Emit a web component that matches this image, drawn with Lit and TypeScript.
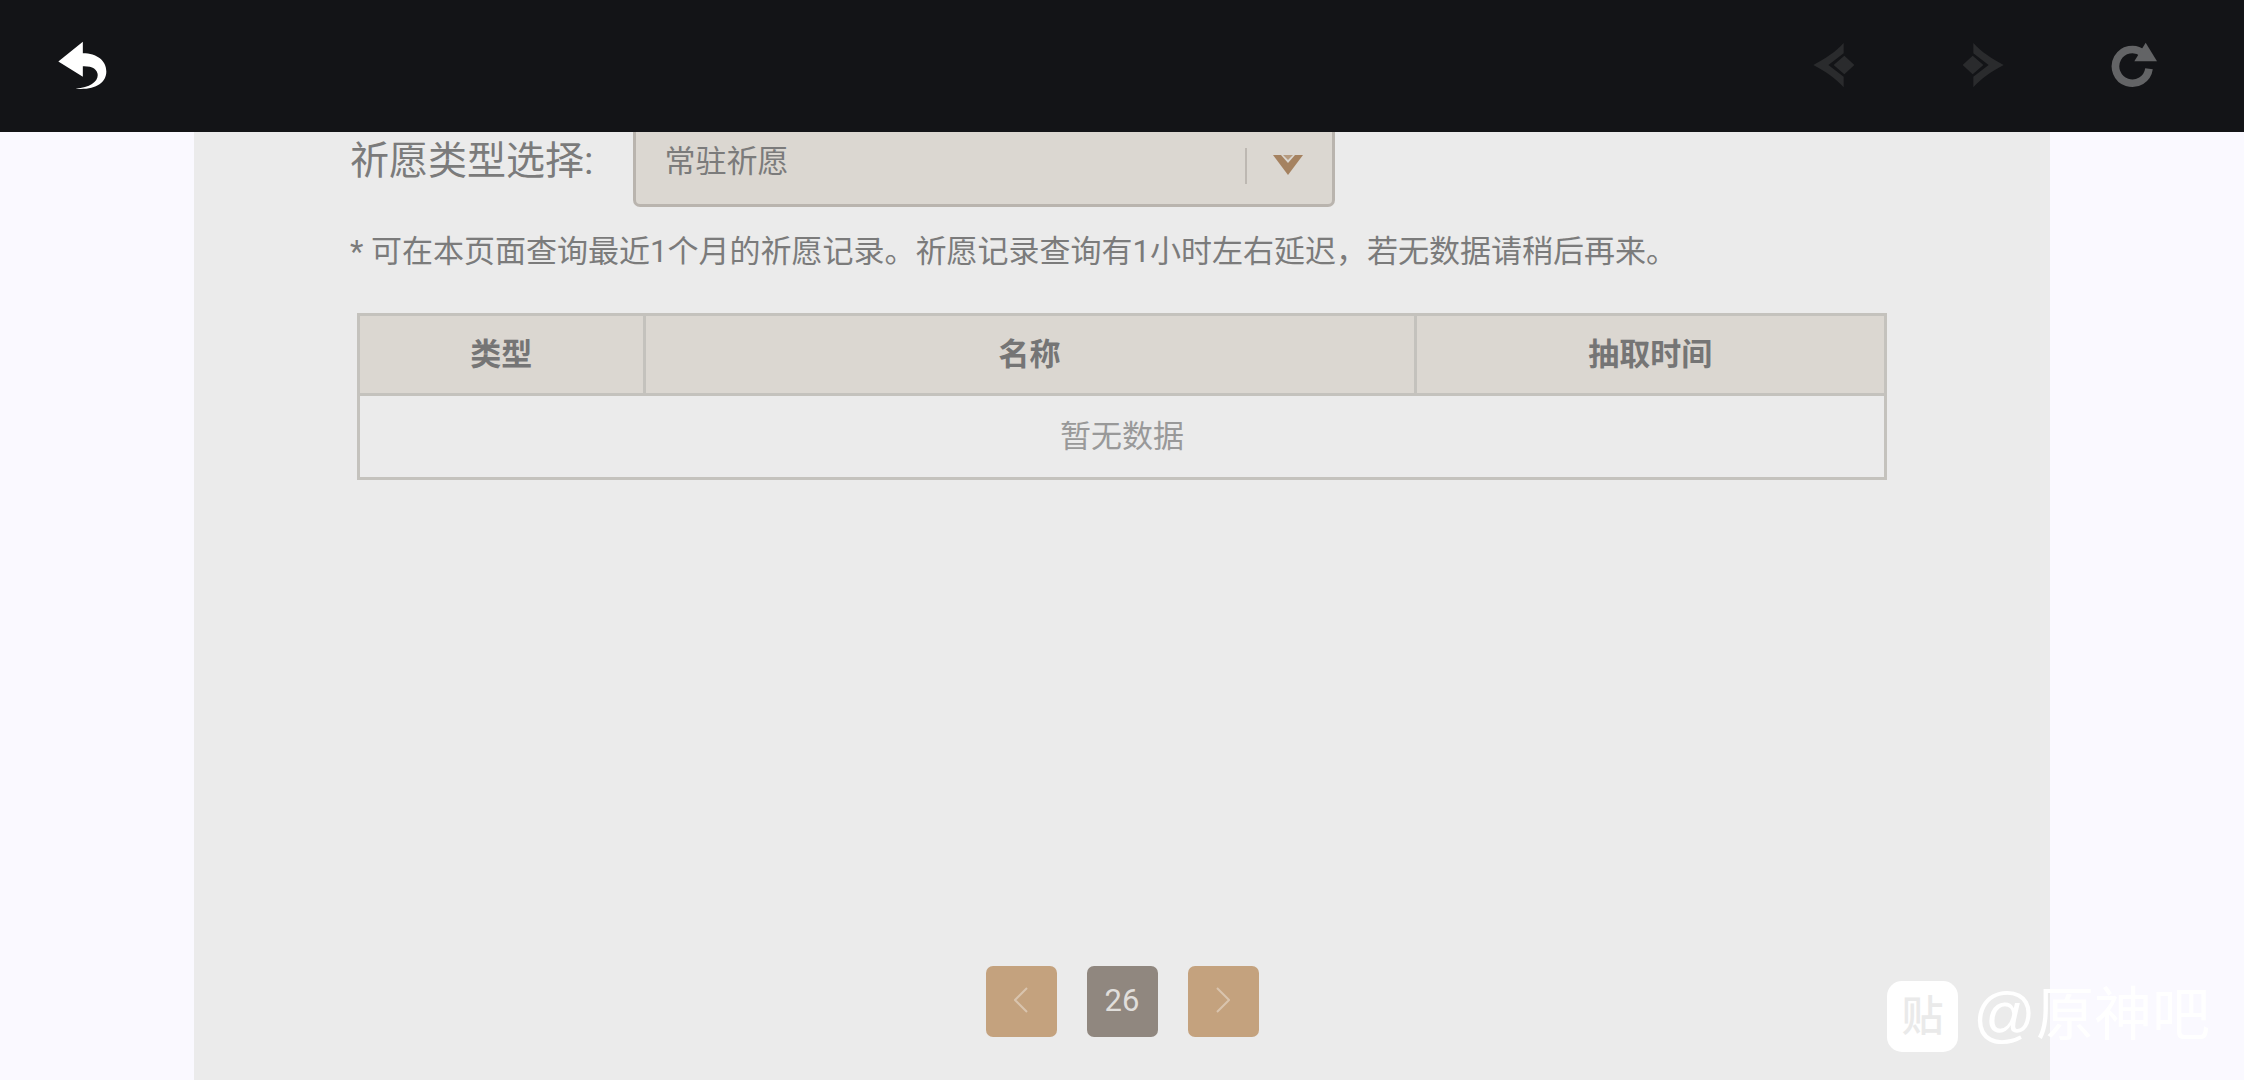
import { LitElement, html, css, svg } from "lit";
import { customElement, state } from "lit/decorators.js";

const backIcon = svg`<svg class="icon-back" viewBox="84 60 148 148" aria-hidden="true">
  <path d="M85 122 L159 62 V97 C202 97 230 119 230 152 C230 187 195 209 137 204 C180 201 204 184 204 163 C204 145 187 135 159 136 V168 Z" />
</svg>`;

const prevIcon = svg`<svg class="icon-nav" viewBox="72 70 126 136" aria-hidden="true">
  <path d="M164 72 V103 L118 138 L164 173 V205 C140 178 110 158 73 138 C110 118 140 99 164 72 Z M166 110 L196 138 L166 166 L134 138 Z" />
</svg>`;

const nextIcon = svg`<svg class="icon-nav" viewBox="520 70 126 136" aria-hidden="true">
  <path d="M554 72 V103 L600 138 L554 173 V205 C578 178 608 158 645 138 C608 118 578 99 554 72 Z M552 110 L522 138 L552 166 L584 138 Z" />
</svg>`;

const reloadIcon = svg`<svg class="icon-reload" viewBox="964 70 138 138" aria-hidden="true">
  <path class="ring" d="M1078 150 A50.5 50.5 0 1 1 1060 104" />
  <path class="head" d="M1068 72 L1102 128 H1034 Z" />
</svg>`;

@customElement("app-root")
export class AppRoot extends LitElement {
  @state() private pool = "常驻祈愿";
  @state() private page = 26;

  private pools = ["新手祈愿", "常驻祈愿", "角色活动祈愿", "武器活动祈愿"];

  static styles = css`
    :host {
      display: flex;
      flex-direction: column;
      height: 100vh;
      overflow: hidden;
      position: relative;
      background: #faf9ff;
      color: #7b7b7b;
      font-family: Roboto, "Noto Sans CJK SC", sans-serif;
      font-size: 31px;
      line-height: 46px;
    }
    * {
      box-sizing: border-box;
    }
    button,
    select {
      font: inherit;
      color: inherit;
      margin: 0;
      padding: 0;
      border: 0;
      background: none;
    }
    svg {
      display: block;
    }
    .bar {
      flex: none;
      display: flex;
      align-items: center;
      gap: 107px;
      height: 132px;
      padding: 0 87px 2px 58px;
      background: #131417;
    }
    .spacer {
      flex: 1;
    }
    .icon-back {
      width: 49px;
      height: 49px;
      fill: #fff;
    }
    .icon-nav {
      width: 42px;
      height: 46px;
      fill: #2a2b2d;
    }
    .icon-reload {
      width: 46px;
      height: 46px;
    }
    .ring {
      fill: none;
      stroke: #636466;
      stroke-width: 23;
    }
    .head {
      fill: #636466;
    }
    .view {
      flex: 1;
      min-height: 0;
      overflow: hidden;
      display: flex;
      padding: 0 194px;
    }
    .panel {
      flex: 1;
      display: flex;
      flex-direction: column;
      padding: 0 156px 43px;
      background: #ebebeb;
    }
    .filter {
      display: flex;
      align-items: center;
      gap: 40px;
      margin-top: -15px;
    }
    .filter label {
      padding-bottom: 2px;
      font-size: 39px;
    }
    .field {
      position: relative;
      flex: 0 1 702px;
    }
    .field select {
      display: block;
      width: 100%;
      height: 90px;
      padding: 0 92px 0 28px;
      appearance: none;
      background: #dbd7d1;
      border: 3px solid #b9b4ae;
      border-radius: 7px;
    }
    .caret {
      position: absolute;
      right: 32px;
      top: 31px;
      display: flex;
      align-items: center;
      gap: 26px;
      pointer-events: none;
    }
    .divider {
      width: 2px;
      height: 36px;
      background: #bdb8b2;
    }
    .caret svg {
      width: 30px;
      height: 20px;
      margin-bottom: 2px;
      fill: #a58260;
    }
    .caret .gem {
      fill: #b69b80;
    }
    .note {
      margin: 22px 0 0;
    }
    table {
      align-self: stretch;
      margin: 38px 7px 0;
      border-collapse: collapse;
      table-layout: fixed;
    }
    th,
    td {
      border: 3px solid #c4c2bd;
      padding: 0;
      text-align: center;
    }
    th {
      height: 80px;
      background: #dbd7d1;
      color: #757575;
      font-weight: 700;
    }
    td {
      height: 84px;
      color: #999;
    }
    .col-type {
      width: 18.7%;
    }
    .col-time {
      width: 30.8%;
    }
    .pager {
      display: flex;
      justify-content: center;
      gap: 30px;
      margin-top: auto;
    }
    .pager > * {
      display: flex;
      align-items: center;
      justify-content: center;
      width: 71px;
      height: 71px;
      padding-bottom: 4px;
      border-radius: 7px;
      background: #c4a27e;
    }
    .pager .current {
      padding-bottom: 2px;
      background: #90877f;
      color: #e0dedb;
    }
    .pager svg {
      width: 14px;
      height: 26px;
      fill: none;
      stroke: #d9c4ae;
      stroke-width: 2;
    }
    .mark {
      position: absolute;
      right: 34px;
      bottom: 26px;
      display: flex;
      align-items: center;
      gap: 15px;
      color: #fff;
      font-family: "Liberation Sans", "Noto Sans CJK SC", sans-serif;
      font-size: 58px;
      line-height: 71px;
    }
    .name {
      padding-bottom: 4px;
    }
    .at {
      font-size: 62px;
    }
    .badge {
      width: 71px;
      height: 71px;
      border-radius: 15px;
      background: #fff;
      color: #eaeaea;
      font-size: 42px;
      font-weight: 500;
      text-align: center;
    }
  `;

  private pick(e: Event) {
    this.pool = (e.target as HTMLSelectElement).value;
  }

  private step(by: number) {
    this.page = Math.max(1, this.page + by);
  }

  render() {
    return html`
      <header class="bar">
        <button aria-label="返回">${backIcon}</button>
        <span class="spacer"></span>
        <button aria-label="后退">${prevIcon}</button>
        <button aria-label="前进">${nextIcon}</button>
        <button aria-label="刷新">${reloadIcon}</button>
      </header>
      <main class="view">
        <section class="panel">
          <div class="filter">
            <label for="pool">祈愿类型选择:</label>
            <div class="field">
              <select id="pool" @change=${this.pick}>
                ${this.pools.map(
                  (p) => html`<option value=${p} ?selected=${p === this.pool}>${p}</option>`
                )}
              </select>
              <span class="caret">
                <span class="divider"></span>
                <svg viewBox="0 0 30 20" aria-hidden="true">
                  <path d="M0 0 H8 L15 8 L22 0 H30 L15 20 Z" />
                  <path class="gem" d="M10 0 H20 L15 5 Z" />
                </svg>
              </span>
            </div>
          </div>
          <p class="note">* 可在本页面查询最近1个月的祈愿记录。祈愿记录查询有1小时左右延迟，若无数据请稍后再来。</p>
          <table>
            <colgroup>
              <col class="col-type" />
              <col />
              <col class="col-time" />
            </colgroup>
            <thead>
              <tr>
                <th scope="col">类型</th>
                <th scope="col">名称</th>
                <th scope="col">抽取时间</th>
              </tr>
            </thead>
            <tbody>
              <tr>
                <td colspan="3">暂无数据</td>
              </tr>
            </tbody>
          </table>
          <nav class="pager">
            <button aria-label="上一页" @click=${() => this.step(-1)}>
              <svg viewBox="0 0 14 26" aria-hidden="true"><path d="M13 1 L1 13 L13 25" /></svg>
            </button>
            <span class="current" aria-current="page">${this.page}</span>
            <button aria-label="下一页" @click=${() => this.step(1)}>
              <svg viewBox="0 0 14 26" aria-hidden="true"><path d="M1 1 L13 13 L1 25" /></svg>
            </button>
          </nav>
        </section>
      </main>
      <div class="mark"><span class="badge">贴</span><span class="name"><span class="at">@</span>原神吧</span></div>
    `;
  }
}
